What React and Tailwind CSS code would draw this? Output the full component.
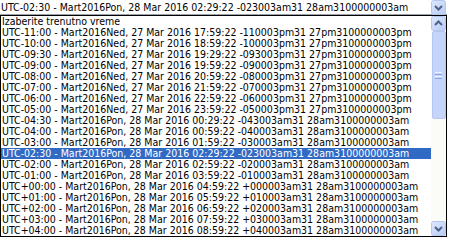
const zones = [
  ['-', '11', '00', 'Ned', '27', '17:59', 'pm'],
  ['-', '10', '00', 'Ned', '27', '18:59', 'pm'],
  ['-', '09', '30', 'Ned', '27', '19:29', 'pm'],
  ['-', '09', '00', 'Ned', '27', '19:59', 'pm'],
  ['-', '08', '00', 'Ned', '27', '20:59', 'pm'],
  ['-', '07', '00', 'Ned', '27', '21:59', 'pm'],
  ['-', '06', '00', 'Ned', '27', '22:59', 'pm'],
  ['-', '05', '00', 'Ned', '27', '23:59', 'pm'],
  ['-', '04', '30', 'Pon', '28', '00:29', 'am'],
  ['-', '04', '00', 'Pon', '28', '00:59', 'am'],
  ['-', '03', '00', 'Pon', '28', '01:59', 'am'],
  ['-', '02', '30', 'Pon', '28', '02:29', 'am'],
  ['-', '02', '00', 'Pon', '28', '02:59', 'am'],
  ['-', '01', '00', 'Pon', '28', '03:59', 'am'],
  ['+', '00', '00', 'Pon', '28', '04:59', 'am'],
  ['+', '01', '00', 'Pon', '28', '05:59', 'am'],
  ['+', '02', '00', 'Pon', '28', '06:59', 'am'],
  ['+', '03', '00', 'Pon', '28', '07:59', 'am'],
  ['+', '04', '00', 'Pon', '28', '08:59', 'am'],
];

// the odd text is what the page really printed, keep it as is
const label = ([sign, hh, mm, day, date, time, ap]) =>
  `UTC${sign}${hh}:${mm} - Mart2016${day}, ${date} Mar 2016 ${time}:22 ${sign}${hh}${mm}03${ap}31 ${date}${ap}3100000003${ap}`;

const Chevron = ({ up }) => (
  <svg width="15" height="15" viewBox="0 0 15 15">
    <defs>
      <linearGradient id={up ? 'gu' : 'gd'} x1="0" y1="0" x2="1" y2="1">
        <stop offset="0" stopColor="#dfe8fd" />
        <stop offset="1" stopColor="#b7cbf7" />
      </linearGradient>
    </defs>
    <rect x="0.5" y="0.5" width="14" height="14" rx="2" fill={`url(#${up ? 'gu' : 'gd'})`} stroke="#b6c7ef" />
    <path
      d={up ? 'M4 9 L7.5 5.5 L11 9' : 'M4 6 L7.5 9.5 L11 6'}
      fill="none"
      stroke="#4d6185"
      strokeWidth="2"
    />
  </svg>
);

export default function App() {
  const selected = 11;
  return (
    <div
      className="w-[450px] h-[240px] bg-white overflow-hidden text-black text-[10.5px]"
      style={{ fontFamily: '"DejaVu Sans Condensed", "Liberation Sans", sans-serif' }}
    >
      <div className="w-[447px] h-[15px] flex items-start border-b border-[#9aa3ad]">
        <div className="flex-1 pl-[1px] pt-[1px] leading-[12px] whitespace-nowrap overflow-hidden">
          {label(zones[selected])}
        </div>
        <div className="w-[16px] pt-[0px]">
          <Chevron />
        </div>
      </div>
      <div className="w-[447px] h-[222px] flex border border-black">
        <div className="flex-1 flex flex-col overflow-hidden">
          <div className="h-[11px] leading-[11px] pl-[1px] whitespace-nowrap">Izaberite trenutno vreme</div>
          {zones.map((z, i) => (
            <div
              key={i}
              className={`h-[11px] leading-[11px] pl-[1px] whitespace-nowrap ${
                i === selected ? 'bg-[#316ac5] text-white' : ''
              }`}
            >
              {label(z)}
            </div>
          ))}
        </div>
        <div className="w-[15px] flex flex-col bg-[#fbfbf8]">
          <Chevron up />
          <div className="mx-[0.5px] h-[88px] rounded-[2px] border border-[#b6c7ef] bg-[#c5d5fa] flex flex-col items-center justify-center gap-[1px]">
            <div className="w-[7px] h-[1px] bg-[#eef3fe]" />
            <div className="w-[7px] h-[1px] bg-[#8ca7e6]" />
            <div className="w-[7px] h-[1px] bg-[#eef3fe]" />
            <div className="w-[7px] h-[1px] bg-[#8ca7e6]" />
          </div>
          <div className="flex-1" />
          <Chevron />
        </div>
      </div>
    </div>
  );
}
